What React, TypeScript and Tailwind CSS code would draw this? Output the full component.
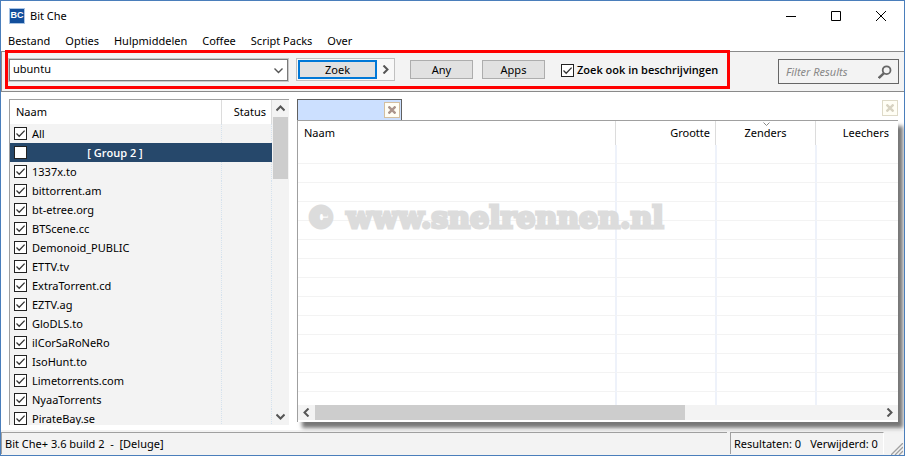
import type { ReactNode } from "react";

const menu = ["Bestand", "Opties", "Hulpmiddelen", "Coffee", "Script Packs", "Over"];

const sources = [
	"1337x.to",
	"bittorrent.am",
	"bt-etree.org",
	"BTScene.cc",
	"Demonoid_PUBLIC",
	"ETTV.tv",
	"ExtraTorrent.cd",
	"EZTV.ag",
	"GloDLS.to",
	"ilCorSaRoNeRo",
	"IsoHunt.to",
	"Limetorrents.com",
	"NyaaTorrents",
	"PirateBay.se",
];

const emptyRows = Array.from({ length: 14 }, (_, i) => i);

function Check({ id, checked = true }: { id: string; checked?: boolean }) {
	return (
		<span className="grid size-[13px] shrink-0">
			<input
				id={id}
				type="checkbox"
				defaultChecked={checked}
				className="peer col-start-1 row-start-1 size-[13px] appearance-none border border-[#222] bg-white"
			/>
			<svg
				viewBox="0 0 13 13"
				className="pointer-events-none invisible col-start-1 row-start-1 size-[13px] peer-checked:visible"
				fill="none"
				stroke="#333"
				strokeWidth="1.3"
			>
				<path d="M2.5 6.5 5.2 9.2 10.6 3.6" />
			</svg>
		</span>
	);
}

function Chevron({ d, className = "" }: { d: string; className?: string }) {
	return (
		<svg viewBox="0 0 9 9" className={`size-[9px] ${className}`} fill="none" stroke="#555" strokeWidth="2">
			<path d={d} />
		</svg>
	);
}

function CloseBox({ label, className }: { label: string; className: string }) {
	return (
		<button aria-label={label} className={`flex size-4 items-center justify-center border bg-[#fffef5] ${className}`}>
			<svg viewBox="0 0 8 8" className="size-2" stroke="currentColor" strokeWidth="2.4">
				<path d="M.5.5l7 7M7.5.5l-7 7" />
			</svg>
		</button>
	);
}

function TitleBar() {
	return (
		<header className="flex h-[29px] shrink-0 items-center pr-px pl-2">
			<div className="flex size-4 items-center justify-center border border-[#a9c4e4] bg-[#124f9c] font-['Liberation_Sans'] text-[9px] leading-none font-bold text-white">
				BC
			</div>
			<h1 className="ml-[5px] flex-1">Bit Che</h1>
			<button aria-label="Minimaliseren" className="flex h-full w-[45px] items-center justify-center">
				<svg viewBox="0 0 10 10" className="size-[10px]" stroke="#000"><path d="M0 5.5h10" /></svg>
			</button>
			<button aria-label="Maximaliseren" className="flex h-full w-[45px] items-center justify-center">
				<svg viewBox="0 0 10 10" className="size-[10px]" fill="none" stroke="#000"><path d="M.5.5h9v9h-9z" /></svg>
			</button>
			<button aria-label="Sluiten" className="flex h-full w-[45px] items-center justify-center">
				<svg viewBox="0 0 10 10" className="size-[10px]" stroke="#000"><path d="M0 0l10 10M10 0L0 10" /></svg>
			</button>
		</header>
	);
}

function FlatButton({ children }: { children: ReactNode }) {
	return <button className="h-[19px] w-[63px] border border-[#adadad] bg-[#e1e1e1] leading-[17px]">{children}</button>;
}

function Toolbar() {
	return (
		<div className="relative flex h-[41px] shrink-0 items-start border-y border-l border-[#8a8a8a] bg-[#f3f3f3] pt-[6px] pr-[5px] pl-[6px]">
			<div className="grid h-6 w-[281px] border border-[#c8c8c8] bg-white">
				<input
					aria-label="Zoekterm"
					defaultValue="ubuntu"
					className="col-start-1 row-start-1 h-[22px] border border-[#7a7a7a] pb-1 pl-[3px] outline-none"
				/>
				<Chevron d="M.5 2.5l4 4 4-4" className="col-start-1 row-start-1 mr-[5px] self-center justify-self-end stroke-[1.4px]" />
			</div>
			<div className="ml-[7px] flex h-[23px] w-[99px] items-center border border-[#c0c0c0] bg-[#f8f8f8] pl-px">
				<button className="h-[19px] w-[79px] border-2 border-[#0078d7] bg-[#e1e1e1] leading-[15px]">Zoek</button>
				<button aria-label="Meer" className="flex h-full flex-1 items-center justify-center">
					<Chevron d="M2.5 .5l4 4-4 4" />
				</button>
			</div>
			<div className="mt-[2px] ml-[15px] flex gap-[9px]">
				<FlatButton>Any</FlatButton>
				<FlatButton>Apps</FlatButton>
			</div>
			<div className="mt-1 ml-4 flex items-center gap-[3px]">
				<Check id="descriptions" />
				<label htmlFor="descriptions" className="font-['Open_Sans'] font-semibold">Zoek ook in beschrijvingen</label>
			</div>
			<div className="mt-px ml-auto flex h-[25px] w-[121px] items-center border border-[#666] pr-[6px] pl-[7px]">
				<input
					aria-label="Filter Results"
					placeholder="Filter Results"
					className="min-w-0 flex-1 italic outline-none placeholder:text-[#888]"
				/>
				<svg viewBox="0 0 14 14" className="size-[14px] shrink-0" fill="none" stroke="#666" strokeWidth="1.8">
					<circle cx="8.6" cy="5.2" r="3.9" />
					<path d="M6 8.2.8 13" strokeWidth="2.4" />
				</svg>
			</div>
			<div className="pointer-events-none absolute -top-[2px] left-[3px] h-[39px] w-[725px] border-[3px] border-[#f00]" />
		</div>
	);
}

function SourceList() {
	const cell = "border-r border-dotted border-[#d5e2ee] p-0";
	return (
		<section className="mb-[5px] flex w-[280px] shrink-0 border-t border-l border-[#a0a0a0] bg-[#f3f3f3]">
			<div className="mr-px min-h-0 flex-1 overflow-hidden">
				<table className="w-full table-fixed border-separate border-spacing-0">
					<thead>
						<tr className="h-6 bg-white">
							<th className="border-r border-[#dcdcdc] p-0 pl-[6px] text-left font-normal">Naam</th>
							<th className="w-[50px] border-r border-[#dcdcdc] p-0 pr-[5px] text-right font-normal">Status</th>
						</tr>
					</thead>
					<tbody>
						<tr className="h-[19px]">
							<td className={cell}>
								<div className="flex items-center gap-[5px] pl-1">
									<Check id="all" />
									<label htmlFor="all">All</label>
								</div>
							</td>
							<td className={cell} />
						</tr>
						<tr className="h-[19px] bg-[#26486b] text-white">
							<td className="p-0">
								<div className="flex items-center gap-[5px] pr-6 pl-1">
									<Check id="group2" checked={false} />
									<label htmlFor="group2" className="flex-1 text-center font-['Open_Sans'] font-semibold">[ Group 2 ]</label>
								</div>
							</td>
							<td className="p-0" />
						</tr>
						{sources.map((name) => (
							<tr key={name} className="h-[19px]">
								<td className={cell}>
									<div className="flex items-center gap-[5px] pl-1">
										<Check id={name} />
										<label htmlFor={name}>{name}</label>
									</div>
								</td>
								<td className={cell} />
							</tr>
						))}
					</tbody>
				</table>
			</div>
			<div className="mr-px flex w-[15px] flex-col">
				<button aria-label="Omhoog" className="flex h-[17px] items-center justify-center">
					<Chevron d="M.5 6.5l4-4 4 4" />
				</button>
				<div className="h-[62px] bg-[#cdcdcd]" />
				<button aria-label="Omlaag" className="mt-auto flex h-[17px] items-center justify-center">
					<Chevron d="M.5 2.5l4 4 4-4" />
				</button>
			</div>
		</section>
	);
}

function Results() {
	const head = "border-l border-[#dcdcdc] p-0 font-normal";
	const cell = "border-b border-l-2 border-b-[#f3f3f3] border-l-[#eef2fa] p-0";
	return (
		<section className="mr-[6px] mb-2 ml-2 flex min-w-0 flex-1 flex-col">
			<div className="flex h-[21px] shrink-0 items-start justify-between">
				<div className="flex h-full w-[105px] items-center justify-end border border-b-0 border-[#606060] bg-[#cce0ff] pr-px">
					<CloseBox label="Tabblad sluiten" className="border-[#d3bfa0] text-[#ab958c]" />
				</div>
				<CloseBox label="Alles sluiten" className="mt-px border-[#dedac8] text-[#d8d3c2]" />
			</div>
			<div className="relative flex min-h-0 flex-1 flex-col border-t border-l border-[#a0a0a0] bg-white shadow-[5px_6px_4px_#777]">
				<div className="min-h-0 flex-1 overflow-hidden">
					<table className="w-full table-fixed border-separate border-spacing-0">
						<thead>
							<tr className="h-6">
								<th className="p-0 pl-[6px] text-left font-normal">Naam</th>
								<th className={`w-[100px] text-right ${head}`}>
									<div className="pr-[5px]">Grootte</div>
								</th>
								<th className={`relative w-[100px] text-center ${head}`}>
									<svg viewBox="0 0 7 4" className="absolute top-px left-[47px] h-1 w-[7px]" fill="none" stroke="#888">
										<path d="M.5.5l3 3 3-3" />
									</svg>
									Zenders
								</th>
								<th className={`w-[83px] text-right ${head}`}>
									<div className="pr-[9px]">Leechers</div>
								</th>
							</tr>
						</thead>
						<tbody>
							{emptyRows.map((row) => (
								<tr key={row} className="h-[19px]">
									<td className="border-b border-[#f3f3f3] p-0" />
									<td className={cell} />
									<td className={cell} />
									<td className={cell} />
								</tr>
							))}
						</tbody>
					</table>
				</div>
				<div className="mb-[2px] flex h-[15px] shrink-0 bg-[#f3f3f3]">
					<button aria-label="Naar links" className="flex w-[17px] items-center justify-center">
						<Chevron d="M6.5 .5l-4 4 4 4" />
					</button>
					<div className="flex-1">
						<div className="h-full w-[65.3%] bg-[#cdcdcd]" />
					</div>
					<button aria-label="Naar rechts" className="flex w-[17px] items-center justify-center">
						<Chevron d="M2.5 .5l4 4-4 4" />
					</button>
				</div>
				<p className="pointer-events-none absolute top-[79px] left-2 font-['DejaVu_Serif'] text-[30px] leading-9 font-bold whitespace-nowrap text-[#dcdcdc] [-webkit-text-stroke:3px_#dcdcdc]">
					© www.snelrennen.nl
				</p>
			</div>
		</section>
	);
}

function StatusBar() {
	return (
		<footer className="flex h-[25px] shrink-0 bg-[#f3f3f3] pt-[2px]">
			<div className="mb-px flex flex-1 items-center border-t border-l border-[#a0a0a0] pl-[3px] whitespace-pre">
				Bit Che+ 3.6 build 2  -  [Deluge]
			</div>
			<div className="mb-px ml-[3px] flex w-[154px] items-center gap-[9px] border-t border-r border-l border-[#a0a0a0] border-r-white pl-[3px] whitespace-nowrap">
				<span>Resultaten: 0</span>
				<span>Verwijderd: 0</span>
			</div>
			<svg viewBox="0 0 12 12" className="mr-px ml-[7px] size-3 self-end" stroke="#a0a0a0" strokeWidth="1.3">
				<path d="M0 12 12 0M4 12l8-8M8 12l4-4" />
			</svg>
		</footer>
	);
}

export default function App() {
	return (
		<div className="flex h-screen flex-col overflow-hidden border border-[#4a7ebb] bg-white font-['Noto_Sans',sans-serif] text-[11px] leading-4 text-black">
			<TitleBar />
			<nav className="flex h-[21px] shrink-0 items-center gap-[15px] pl-[7px]">
				{menu.map((item) => (
					<button key={item}>{item}</button>
				))}
			</nav>
			<Toolbar />
			<main className="flex min-h-0 flex-1 pt-[7px] pl-2">
				<SourceList />
				<Results />
			</main>
			<StatusBar />
		</div>
	);
}
